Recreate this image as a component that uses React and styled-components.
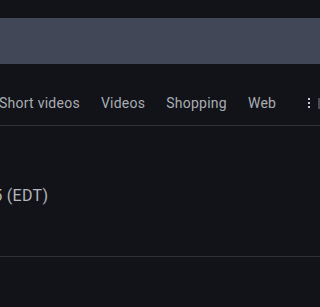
import React from "react";
import styled, { createGlobalStyle } from "styled-components";

const GlobalStyle = createGlobalStyle`
  html, body {
    margin: 0;
    padding: 0;
    background: #121318;
    overflow: hidden;
  }
  body {
    font-family: Roboto, "Liberation Sans", sans-serif;
  }
`;

const tabs = ["Short videos", "Videos", "Shopping", "Web"];

const App = () => {
  return (
    <Page>
      <GlobalStyle />
      <SearchBar />
      <TabNav>
        <TabList>
          {tabs.map((t) => (
            <Tab key={t}>{t}</Tab>
          ))}
        </TabList>
        <MoreButton aria-label="More">
          <Dot />
          <Dot />
          <Dot />
        </MoreButton>
        <EdgeTool />
      </TabNav>
      <Section>
        <Stamp>Updated 11:45 (EDT)</Stamp>
      </Section>
    </Page>
  );
};
export default App;

const Page = styled.div`
  width: 320px;
  height: 307px;
  padding-top: 18px;
  box-sizing: border-box;
  overflow: hidden;
`;

const SearchBar = styled.div`
  height: 46px;
  background: #414757;
`;

const TabNav = styled.nav`
  height: 62px;
  display: flex;
  align-items: center;
  border-bottom: 1px solid #2e3036;
  position: relative;
  padding-top: 17px;
  box-sizing: border-box;
`;

const TabList = styled.div`
  display: flex;
  gap: 21px;
  margin-left: -1px;
  flex: 1;
  white-space: nowrap;
`;

const Tab = styled.span`
  font-size: 14px;
  color: #a9adb4;
  letter-spacing: 0.25px;
`;

const MoreButton = styled.div`
  display: flex;
  flex-direction: column;
  gap: 2px;
  margin-right: 10px;
`;

const Dot = styled.span`
  width: 2px;
  height: 2px;
  background: #c4c7cc;
`;

const EdgeTool = styled.span`
  position: absolute;
  right: 0;
  top: 34px;
  width: 2px;
  height: 11px;
  background: #4a4d55;
`;

const Section = styled.div`
  height: 131px;
  display: flex;
  align-items: center;
  border-bottom: 1px solid #2e3036;
  padding-top: 9px;
  box-sizing: border-box;
  overflow: hidden;
`;

const Stamp = styled.span`
  font-size: 16px;
  color: #b3b7be;
  white-space: nowrap;
  letter-spacing: 0.3px;
  margin-left: -105px;
`;
